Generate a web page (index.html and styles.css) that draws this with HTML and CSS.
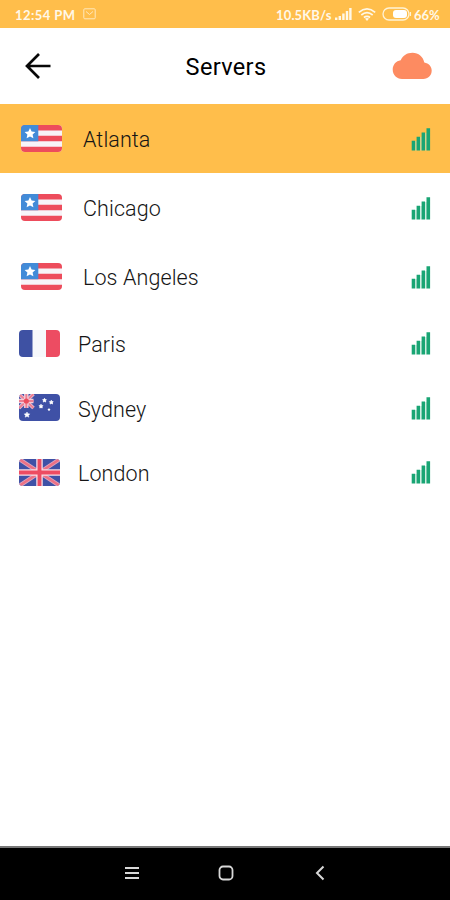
FILE: index.html
```html
<!DOCTYPE html>
<html lang="en">
<head>
<meta charset="utf-8">
<meta name="viewport" content="width=device-width, initial-scale=1.0">
<link rel="stylesheet" href="styles.css">
<title>Servers</title>
</head>
<body>
<!-- shared icons -->
<svg class="defs" width="0" height="0">
<defs>
<clipPath id="round"><rect width="41" height="27" rx="4"/></clipPath>
<symbol id="us" viewBox="0 0 41 27">
<g clip-path="url(#round)">
<path fill="#f7f4f8" d="M0 0h41v27H0z"/>
<path fill="#ed4c5c" d="M0 0h41v5.4H0zM0 10.8h41v5.4H0zM0 21.8h41V27H0z"/>
<path fill="#428bd8" d="M0 0h17.3v16.2H0z"/>
<path fill="#fff" d="M9 3l1.6 3.5 3.8.4-2.8 2.6.8 3.8L9 11.4l-3.4 1.9.8-3.8-2.8-2.6 3.8-.4z"/>
</g>
</symbol>
<symbol id="fr" viewBox="0 0 41 27">
<g clip-path="url(#round)">
<path fill="#f6f8fb" d="M0 0h41v27H0z"/>
<path fill="#3e51a3" d="M0 0h13.500v27H0z"/>
<path fill="#ed4c62" d="M27 0h14v27H27z"/>
</g>
</symbol>
<symbol id="au" viewBox="0 0 41 27">
<g clip-path="url(#round)">
<path fill="#3f51a6" d="M0 0h41v27H0z"/>
<path stroke="#e9bfd2" stroke-width="3.600" d="M0 0l14.500 14M14.500 0L0 14"/>
<path stroke="#ed7f93" stroke-width="1.800" d="M0 0l14.500 14M14.500 0L0 14"/>
<path stroke="#f3cbd8" stroke-width="4.500" d="M7.300 0v14M0 7h14.500"/>
<path stroke="#ed7f93" stroke-width="1.800" d="M7.300 0v14M0 7h14.500"/>
<circle cx="7.300" cy="7" r="2.600" fill="#ed4c5c"/>
<g fill="#fff">
<path d="M8 18l.9 1.700 1.900.200-1.300 1.400.300 1.900-1.800-.9-1.800.9.300-1.900-1.300-1.400 1.900-.200z" stroke="#fff" stroke-width=".5"/>
<path id="star" stroke="#fff" stroke-width=".8" d="M25.500 4.300l.6 1.200 1.300.2-.9 1 .2 1.300-1.200-.6-1.200.6.2-1.300-.9-1 1.300-.2z"/>
<use href="#star" x="-3.5" y="6"/>
<use href="#star" x="6.8" y="2"/>
<circle cx="30" cy="15.600" r="1.200"/>
</g>
</g>
</symbol>
<symbol id="gb" viewBox="0 0 41 27">
<g clip-path="url(#round)">
<path fill="#3f51a6" d="M0 0h41v27H0z"/>
<path stroke="#dca6c0" stroke-width="4.200" d="M0 0l41 27M41 0L0 27"/>
<path stroke="#ed7185" stroke-width="2.400" d="M0 0l41 27M41 0L0 27"/>
<path stroke="#f8dfe8" stroke-width="6.500" d="M20.500 0v27M0 13.500h41"/>
<path stroke="#ed4c62" stroke-width="3.900" d="M20.500 0v27M0 13.500h41"/>
</g>
</symbol>
<symbol id="bars" viewBox="0 0 20 24">
<path fill="#a9dfc9" d="M4 14h2v9.600H4zM9 10h2v13.600H9zM14 6h2v17.600h-2z" opacity=".55"/>
<path fill="#19a574" d="M.7 13.800h3.400v9.800H.7zM5.600 9.800H9v13.800H5.600zM10.600 5.600H14v18h-3.400zM15.500 1.200h3.600v22.400h-3.600z"/>
</symbol>
</defs>
</svg>

<div class="status">
<span class="time">12:54 PM</span>
<svg class="mail" width="13" height="12" viewBox="0 0 13 12" fill="none" stroke="#ffe8bd"><rect x=".8" y=".8" width="11.4" height="10" rx="1"/><path d="M3 3.500l3.500 3 3.500-3"/></svg>
<span class="speed">10.5KB/s</span>
<svg class="cell" width="17" height="12" viewBox="0 0 17 12" fill="#fff8e8"><path d="M0 9.500h2.400V12H0zM3.600 8H6v4H3.600zM7.200 5.500h2.400V12H7.200zM10.800 3h2.400v9h-2.400zM14.200 0h2.400v12h-2.400z"/></svg>
<svg class="wifi" width="18" height="13" viewBox="0 0 18 13" fill="none" stroke="#fff8e8" stroke-width="1.700"><path d="M.8 4.300q8.200-6.800 16.400 0M3.300 7q5.700-4.600 11.400 0M5.900 9.500q3.100-2.400 6.200 0"/><path fill="#fff8e8" stroke="none" d="M7 10.600q2-1.400 4 0L9 13z"/></svg>
<svg class="battery" width="30" height="14" viewBox="0 0 30 14"><rect x="1" y="1" width="26" height="12" rx="6" fill="none" stroke="#fff3d6" stroke-width="1.300"/><rect x="11" y="3" width="14" height="8" rx="3" fill="#fff"/><path d="M28.400 5v4" stroke="#fff3d6" stroke-width="1.300"/></svg>
<span class="percent">66%</span>
</div>

<div class="header">
<svg width="28" height="28" viewBox="0 0 28 28" fill="none" stroke="#080808" stroke-width="2.700"><path d="M26.500 14H3M15 2L3 14l12 12"/></svg>
<h1>Servers</h1>
<svg width="40" height="28" viewBox="0 0 40 28" fill="#fd8b61"><path d="M10 27C4.500 27 .7 23 .7 17.600c0-5 3.300-8.600 8-9.400C11 3.500 15 .8 20.500.8c6 0 10.700 4 11.800 9.800 4.500.8 7.400 4 7.400 8 0 5-3.500 8.400-8.500 8.400z"/></svg>
</div>

<div class="list">
<div class="row us on"><svg class="flag"><use href="#us"/></svg><span>Atlanta</span><svg class="signal"><use href="#bars"/></svg></div>
<div class="row us"><svg class="flag"><use href="#us"/></svg><span>Chicago</span><svg class="signal"><use href="#bars"/></svg></div>
<div class="row us"><svg class="flag"><use href="#us"/></svg><span>Los Angeles</span><svg class="signal"><use href="#bars"/></svg></div>
<div class="row"><svg class="flag"><use href="#fr"/></svg><span>Paris</span><svg class="signal"><use href="#bars"/></svg></div>
<div class="row"><svg class="flag"><use href="#au"/></svg><span>Sydney</span><svg class="signal"><use href="#bars"/></svg></div>
<div class="row"><svg class="flag"><use href="#gb"/></svg><span>London</span><svg class="signal"><use href="#bars"/></svg></div>
</div>

<div class="nav">
<svg width="16" height="16" viewBox="0 0 16 16" stroke="#d8d8d8" stroke-width="2"><path d="M1 3h14M1 8h14M1 13h14"/></svg>
<svg width="16" height="16" viewBox="0 0 16 16" fill="none" stroke="#d8d8d8" stroke-width="1.800"><rect x="1.500" y="1.500" width="13" height="13" rx="3.500"/></svg>
<svg width="16" height="16" viewBox="0 0 16 16" fill="none" stroke="#d8d8d8" stroke-width="2"><path d="M11.500 1.500L5 8l6.500 6.500"/></svg>
</div>
</body>
</html>
```

FILE: styles.css
```css
*{
box-sizing:border-box;
}
body{
margin:0;
height:900px;
display:flex;
flex-direction:column;
background:white;
color:#151515;
font-family:Roboto, sans-serif;
overflow:hidden;
}
svg{
display:block;
flex:none;
}
.defs{
position:absolute;
}
.status{
height:28px;
padding:0 11px 0 15px;
display:flex;
align-items:center;
background:#ffbe4b;
color:#fff8e8;
font-family:Lato, sans-serif;
font-size:13px;
font-weight:bold;
white-space:nowrap;
}
.status span{
margin-top:1px;
}
.time{
width:61px;
letter-spacing:.45px;
}
.mail{
margin-left:7px;
}
.speed{
width:56px;
margin-left:auto;
letter-spacing:.15px;
}
.cell{
margin-left:3px;
}
.wifi{
margin-left:6px;
}
.battery{
margin-left:6px;
}
.percent{
width:25px;
margin-left:2px;
}
.header{
height:76px;
padding:0 18px 0 24px;
display:flex;
align-items:center;
justify-content:space-between;
}
h1{
margin:2px 0 0 8px;
font-size:23.5px;
font-weight:normal;
letter-spacing:.35px;
color:black;
}
.list{
flex:1;
}
.row{
height:64.5px;
padding:0 19px;
display:flex;
align-items:center;
font-size:21.5px;
font-weight:300;
letter-spacing:.1px;
}
.row span{
margin:3px auto 0 18px;
}
.us{
height:69px;
padding-left:21px;
}
.us span{
margin-top:2px;
margin-left:21px;
}
.on{
background:#ffbe4b;
}
.flag{
width:41px;
height:27px;
}
.signal{
width:20px;
height:24px;
}
.nav{
height:54px;
padding:0 0 2px 2px;
border-top:2px solid #777;
display:flex;
align-items:center;
justify-content:center;
gap:78px;
background:black;
}
```
